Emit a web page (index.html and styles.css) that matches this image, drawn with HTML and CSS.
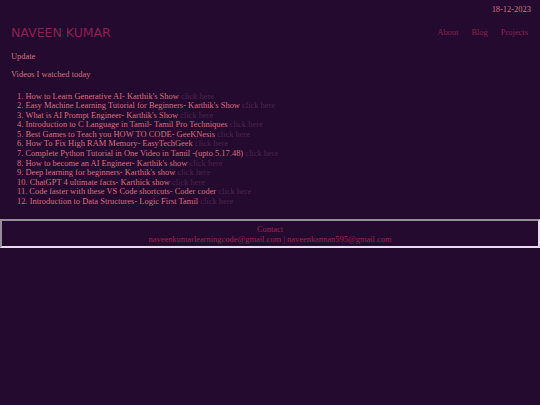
FILE: index.html
```html
<!DOCTYPE html>
<html lang="en">
<head>
<meta charset="utf-8">
<title>Naveen Kumar</title>
<link rel="stylesheet" href="styles.css">
</head>
<body>
<div class="date">18-12-2023</div>
<header class="header">
  <div class="brand">NAVEEN KUMAR</div>
  <nav class="nav">
    <a href="#">About</a>
    <a href="#">Blog</a>
    <a href="#">Projects</a>
  </nav>
</header>
<main class="main">
  <p class="para">Update</p>
  <p class="para">Videos I watched today</p>
  <ol class="videos">
    <li>How to Learn Generative AI- Karthik's Show <a href="#">click here</a></li>
    <li>Easy Machine Learning Tutorial for Beginners- Karthik's Show <a href="#">click here</a></li>
    <li>What is AI Prompt Engineer- Karthik's Show <a href="#">click here</a></li>
    <li>Introduction to C Language in Tamil- Tamil Pro Techniques <a href="#">click here</a></li>
    <li>Best Games to Teach you HOW TO CODE- GeeKNesis <a href="#">click here</a></li>
    <li>How To Fix High RAM Memory- EasyTechGeek <a href="#">click here</a></li>
    <li>Complete Python Tutorial in One Video in Tamil -(upto 5.17.48) <a href="#">click here</a></li>
    <li>How to become an AI Engineer- Karthik's show <a href="#">click here</a></li>
    <li>Deep learning for beginners- Karthik's show <a href="#">click here</a></li>
    <li>ChatGPT 4 ultimate facts- Karthick show <a href="#">click here</a></li>
    <li>Code faster with these VS Code shortcuts- Coder coder <a href="#">click here</a></li>
    <li>Introduction to Data Structures- Logic First Tamil <a href="#">click here</a></li>
  </ol>
</main>
<footer class="contact">
  <div>Contact</div>
  <div>naveenkumarlearningcode@gmail.com | naveenkannan595@gmail.com</div>
</footer>
</body>
</html>
```
FILE: styles.css
```css
html, body {
  margin: 0;
  padding: 0;
  background: #230a2e;
  min-height: 100%;
}
body {
  font-family: "Liberation Serif", "Times New Roman", serif;
  font-size: 8.45px;
  line-height: 9.7px;
  color: #dc6f80;
}
.date {
  text-align: right;
  padding: 5px 9px 0 0;
  color: #dc6f80;
}
.header {
  display: flex;
  justify-content: space-between;
  align-items: center;
  padding: 0 12px 0 11px;
  margin-top: 10px;
}
.brand {
  font-family: "DejaVu Sans", Verdana, sans-serif;
  font-size: 12.5px;
  line-height: 15px;
  color: #8c2150;
}
.nav {
  display: flex;
  gap: 13px;
  padding-top: 2px;
}
.nav a {
  color: #8c2150;
  text-decoration: none;
}
.main {
  padding: 0 11px;
}
.para {
  margin: 8.4px 0;
}
.main .para:first-child {
  margin-top: 12px;
}
.videos {
  list-style-position: inside;
  margin: 12px 0 0;
  padding: 0 0 0 6px;
  line-height: 9.6px;
}
.videos a {
  color: #4f2450;
  text-decoration: none;
}
.contact {
  margin-top: 12px;
  border: 2px inset #e6dcec;
  padding: 3px 0 2px;
  text-align: center;
  color: #a3214f;
  line-height: 10px;
}
```
